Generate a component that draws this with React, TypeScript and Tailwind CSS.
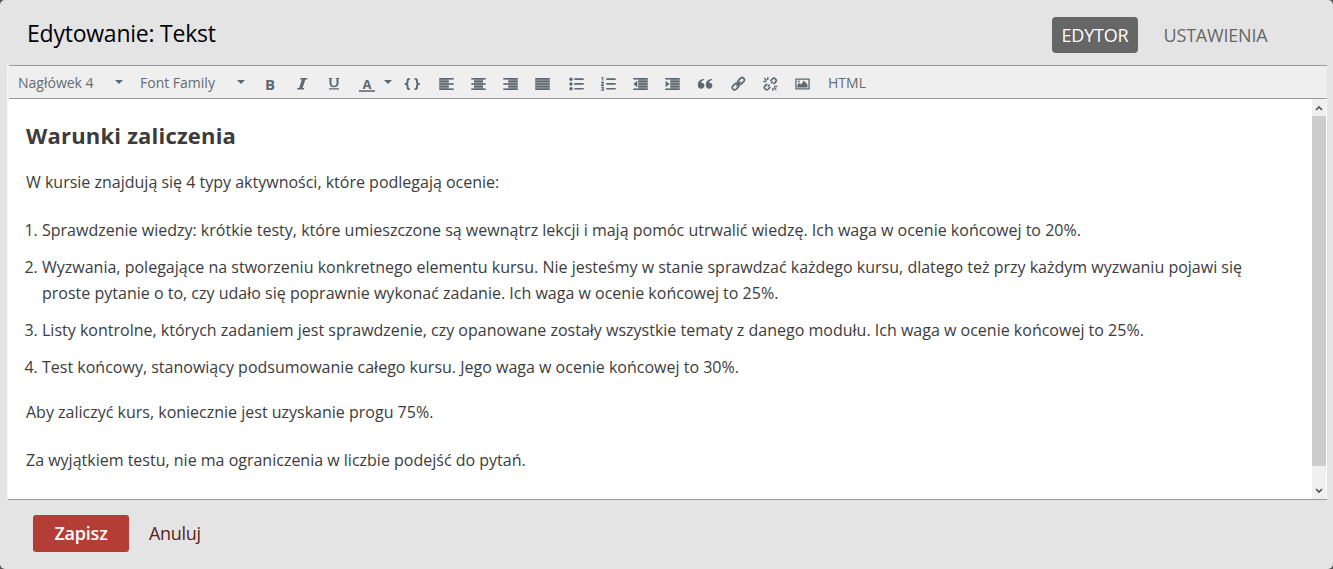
import React from 'react';

const C = '#5f6871';

function Icon({ children, w = 'w-8' }: { children: React.ReactNode; w?: string }) {
  return (
    <button className={`${w} flex h-8 shrink-0 items-center justify-center`}>
      <svg width="16" height="16" viewBox="0 0 16 16" fill={C} className="mt-1">
        {children}
      </svg>
    </button>
  );
}

function Lines({ rows }: { rows: [number, number][] }) {
  const x = Math.max(...rows.map((r) => r[0]));
  const right = Math.min(...rows.map((r) => r[0] + r[1]));
  return (
    <>
      <rect x={x} y={2.5} width={right - x} height={11} fill={C} opacity={0.55} />
      {rows.map(([rx, w], i) => (
        <rect key={i} x={rx} y={2 + i * 2.6} width={w} height={1.6} fill={C} />
      ))}
    </>
  );
}

function Caret() {
  return (
    <svg width="8" height="4" viewBox="0 0 8 4" fill={C} className="shrink-0">
      <path d="M0 0h8L4 4z" />
    </svg>
  );
}

function Select({ label, width }: { label: string; width: string }) {
  return (
    <button className={`${width} flex h-8 shrink-0 items-center justify-between`}>
      <span className="whitespace-nowrap">{label}</span>
      <Caret />
    </button>
  );
}

function Toolbar() {
  return (
    <div className="flex h-[34px] w-[1318px] items-center border-y border-[#9b9b9b] bg-[#efefef] pl-[9px] text-[14px] text-[#646c74]">
      <Select label="Nagłówek 4" width="w-[105px] mr-[17px]" />
      <Select label="Font Family" width="w-[105px] mr-[9px]" />
      <button className="h-8 w-8 shrink-0 pt-[3px] text-[15px] font-bold leading-[28px] text-[#5f6871]">B</button>
      <Icon>
        <path d="M6.500 2h7l-.4 1.400h-1.700L8.600 12h1.700l-.4 1.400H3L3.400 12h1.700l2.800-8.600H6.100z" />
      </Icon>
      <Icon>
        <path d="M2.800 2h3.400v1h-.7v4.200c0 1.700.8 2.500 2.500 2.500s2.500-.8 2.500-2.500V3h-.7V2h3.400v1h-.7v4.200c0 2.700-1.700 4-4.500 4s-4.500-1.300-4.500-4V3h-.7zM3 12.200h10v1.300H3z" />
      </Icon>
      <button className="flex h-8 w-[34px] shrink-0 flex-col items-center pt-[10px] text-[13px] font-bold leading-[16px] text-[#5f6871]">
        <span className="h-[14px]">A</span>
        <span className="h-[2px] w-4 shrink-0 bg-[#7d858b]" />
      </button>
      <Caret />
      <Icon w="w-[40px]">
        <path d="M6 2v1.700c-1.200 0-1.500.3-1.500 1.200v1.400c0 .9-.4 1.400-1.200 1.700.8.3 1.200.8 1.200 1.700v1.400c0 .9.300 1.200 1.500 1.200V14C3.600 14 2.600 13.300 2.600 11.400v-1.200c0-.9-.4-1.300-1.900-1.300V7.100c1.500 0 1.900-.4 1.900-1.300V4.600C2.600 2.700 3.600 2 6 2zM10.500 2v1.700c1.200 0 1.500.3 1.500 1.200v1.400c0 .9.400 1.400 1.200 1.700-.8.3-1.200.8-1.200 1.700v1.400c0 .9-.3 1.200-1.500 1.200V14c2.400 0 3.400-.7 3.400-2.600v-1.200c0-.9.400-1.300 1.900-1.300V7.100c-1.500 0-1.900-.4-1.900-1.300V4.600C13.900 2.700 12.900 2 10.500 2z" />
      </Icon>
      <div className="-ml-[2px] flex">
        <Icon><Lines rows={[[1.3, 14.4], [1.3, 9.4], [1.3, 14.4], [1.3, 9.4], [1.3, 14.4]]} /></Icon>
        <Icon><Lines rows={[[1.3, 14.4], [4, 9], [1.3, 14.4], [4, 9], [1.3, 14.4]]} /></Icon>
        <Icon><Lines rows={[[1.3, 14.4], [6.3, 9.4], [1.3, 14.4], [6.3, 9.4], [1.3, 14.4]]} /></Icon>
        <Icon><Lines rows={[[1.3, 14.4], [1.3, 14.4], [1.3, 14.4], [1.3, 14.4], [1.3, 14.4]]} /></Icon>
      </div>
      <Icon w="w-[36px]">
        <circle cx="3" cy="3.200" r="1.700" />
        <circle cx="3" cy="8" r="1.700" />
        <circle cx="3" cy="12.800" r="1.700" />
        <path d="M6.300 2.300h9.400v1.700H6.300zM6.300 7.100h9.400v1.700H6.300zM6.300 11.900h9.400v1.700H6.300z" />
      </Icon>
      <Icon w="w-[28px]">
        <path d="M1.500 1h1.800v3.800H2.200V2.200h-.7zM1 5.800h2.900v2.100L2.500 8.900h1.400v1H1V8.600l1.600-1v-.7H1zM1 10.800h2.900v4H1v-1h1.700v-.6H1.500v-.8h1.200v-.6H1zM6.300 2.300h9.400v1.700H6.300zM6.300 7.100h9.400v1.700H6.300zM6.300 11.900h9.400v1.700H6.300z" />
      </Icon>
      <Icon w="w-[36px]">
        <Lines rows={[[1.3, 14.4], [6.3, 9.4], [6.3, 9.4], [6.3, 9.4], [1.3, 14.4]]} />
        <path d="M5.300 4.800v6.400L1.300 8z" />
      </Icon>
      <Icon w="w-[28px]">
        <Lines rows={[[1.3, 14.4], [6.3, 9.4], [6.3, 9.4], [6.3, 9.4], [1.3, 14.4]]} />
        <path d="M1.600 4.800v6.400l4-3.200z" />
      </Icon>
      <Icon w="w-[38px]">
        <path d="M7 3v1C5.200 4.500 4.200 5.500 4 6.800c2-.3 3.400 1 3.400 2.700 0 1.900-1.400 3.200-3.300 3.200S.8 11.300.8 9C.8 5.500 3.200 3.200 7 3zM15 3v1c-1.800.5-2.800 1.500-3 2.800 2-.3 3.400 1 3.400 2.700 0 1.900-1.400 3.200-3.300 3.200S8.800 11.300 8.800 9c0-3.500 2.400-5.800 6.200-6z" />
      </Icon>
      <Icon w="w-[28px]">
        <g fill="none" stroke={C} strokeWidth="1.700">
          <rect x="7.300" y="2.700" width="7.500" height="4.600" rx="2.300" transform="rotate(-45 11 5)" />
          <rect x="1.800" y="8.200" width="7.500" height="4.600" rx="2.300" transform="rotate(-45 5.600 10.500)" />
          <path d="M6.100 10l4.400-4.400" />
        </g>
      </Icon>
      <Icon w="w-[36px]">
        <g fill="none" stroke={C} strokeWidth="1.700">
          <path d="M8.300 5l2-2a2.200 2.200 0 0 1 3.200 3.200l-2 2M8.300 11l-2 2a2.200 2.200 0 0 1-3.200-3.200l2-2M10.800 5.500L9 7.300M5.800 10.500l1.800-1.800" />
          <path d="M5.800 1v3M1.300 5.500h3M2.300 2l2.500 2.500M10.800 12v3M12.300 10.500h3M11.800 11.500l2.500 2.500" strokeWidth="1.300" />
        </g>
      </Icon>
      <Icon w="w-[28px]">
        <path fillRule="evenodd" d="M1.300 2.500h14.400v11H1.300zM2.600 3.800v8.400h11.800V3.800z" />
        <path d="M3.300 11.500V9l2-2 2 1.500 2.500-4 3.700 4v3z" />
        <circle cx="4.800" cy="5.500" r="1" />
      </Icon>
      <button className="ml-3">HTML</button>
    </div>
  );
}

export default function App() {
  return (
    <div className="h-[569px] w-[1333px] overflow-hidden bg-[#555]">
      <div className="flex h-full flex-col rounded-[5px] bg-[#e4e4e4] font-['Open_Sans',sans-serif]">
        <header className="flex h-[65px] shrink-0 items-start justify-between pl-[27px] pr-[56px] pt-[17px]">
          <h1 className="-mt-px text-[23px] leading-[34px] tracking-[-0.23px] text-black">Edytowanie: Tekst</h1>
          <nav className="flex text-[18px] leading-9 tracking-[-0.2px] text-[#666]">
            <button className="h-9 w-[86px] rounded bg-[#666] text-white">EDYTOR</button>
            <button className="ml-4 h-9 w-[123px]">USTAWIENIA</button>
          </nav>
        </header>
        <div className="ml-[7px] flex w-[1320px] flex-col border-l border-[#f5f5f5]">
          <div className="bg-[#efefef] pl-px">
            <Toolbar />
          </div>
          <div className="flex h-[401px] border-b border-[#9b9b9b] bg-white">
            <main className="flex-1 pl-[18px] text-[16px] leading-[26px] text-[#3c3c3c]">
              <h4 className="mt-[21px] text-[22px] font-bold leading-[30px] tracking-[0.2px]">Warunki zaliczenia</h4>
              <p className="mt-[19px]">W kursie znajdują się 4 typy aktywności, które podlegają ocenie:</p>
              <ol className="mt-[22px] flex list-decimal flex-col gap-[11px] pl-4 tracking-[0.006px]">
                <li>Sprawdzenie wiedzy: krótkie testy, które umieszczone są wewnątrz lekcji i mają pomóc utrwalić wiedzę. Ich waga w ocenie końcowej to 20%.</li>
                <li>
                  Wyzwania, polegające na stworzeniu konkretnego elementu kursu. Nie jesteśmy w stanie sprawdzać każdego kursu, dlatego też przy każdym wyzwaniu pojawi się
                  <br />
                  proste pytanie o to, czy udało się poprawnie wykonać zadanie. Ich waga w ocenie końcowej to 25%.
                </li>
                <li>Listy kontrolne, których zadaniem jest sprawdzenie, czy opanowane zostały wszystkie tematy z danego modułu. Ich waga w ocenie końcowej to 25%.</li>
                <li>Test końcowy, stanowiący podsumowanie całego kursu. Jego waga w ocenie końcowej to 30%.</li>
              </ol>
              <p className="mt-[19px]">Aby zaliczyć kurs, koniecznie jest uzyskanie progu 75%.</p>
              <p className="mt-[22px]">Za wyjątkiem testu, nie ma ograniczenia w liczbie podejść do pytań.</p>
            </main>
            <div className="mr-px flex w-[14px] shrink-0 flex-col bg-[#f0f0f0]">
              <div className="flex h-[17px] items-center justify-center">
                <svg width="8" height="6" viewBox="0 0 8 6" fill="none" stroke="#505050" strokeWidth="1.600"><path d="M1 5l3-3 3 3" /></svg>
              </div>
              <div className="h-[350px] bg-[#cdcdcd]" />
              <div className="flex flex-1 items-center justify-center pt-[17px]">
                <svg width="8" height="6" viewBox="0 0 8 6" fill="none" stroke="#505050" strokeWidth="1.600"><path d="M1 1l3 3 3-3" /></svg>
              </div>
            </div>
          </div>
        </div>
        <footer className="flex items-center gap-5 pl-[33px] pt-[15px] text-[18px]">
          <button className="h-[37px] w-24 rounded-[3px] bg-[#b43e36] font-semibold tracking-[-0.2px] text-white">Zapisz</button>
          <button className="tracking-[-0.3px] text-[#592222]">Anuluj</button>
        </footer>
      </div>
    </div>
  );
}
